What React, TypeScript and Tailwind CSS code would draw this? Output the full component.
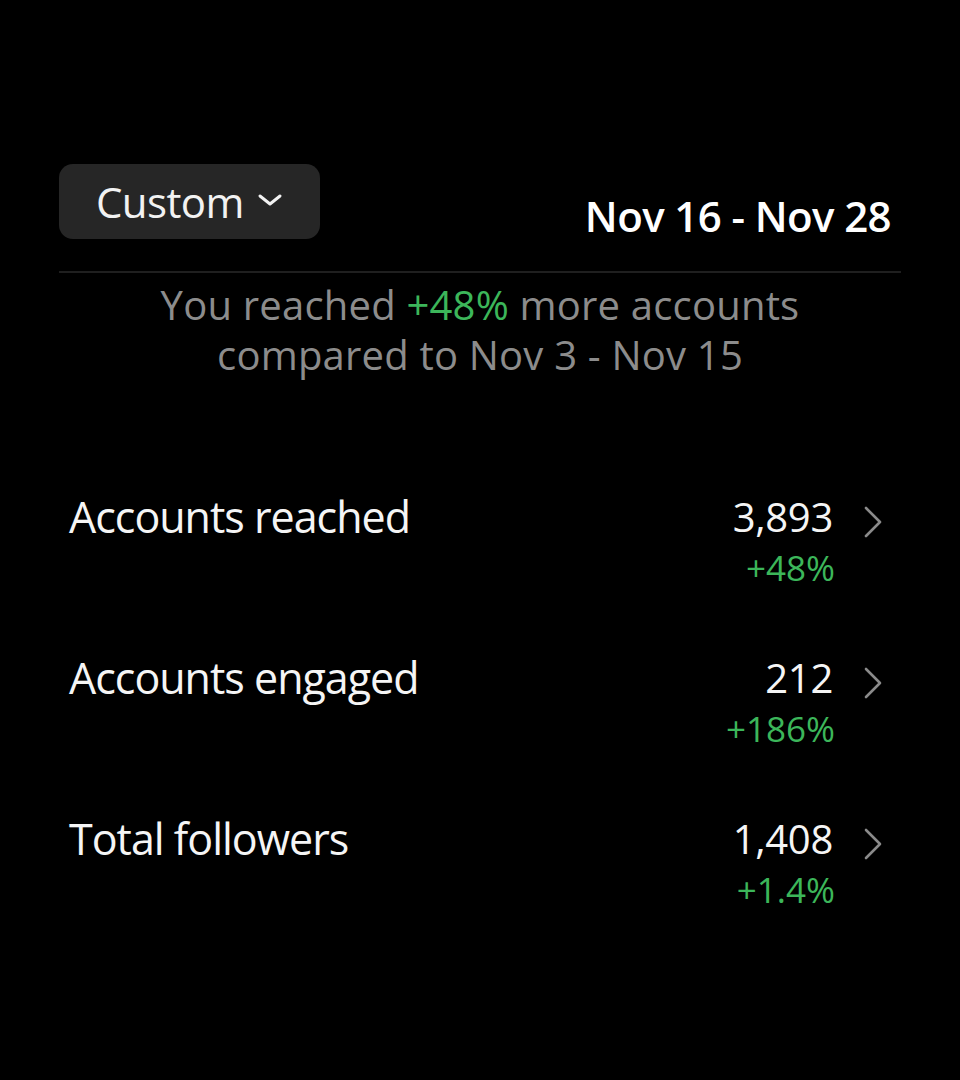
const stats = [
  { label: 'Accounts reached', value: '3,893', change: '+48%' },
  { label: 'Accounts engaged', value: '212', change: '+186%' },
  { label: 'Total followers', value: '1,408', change: '+1.4%' },
];

function Caret() {
  return (
    <svg width="26" height="14" viewBox="0 0 26 14" fill="none" className="mt-[-4px]">
      <polyline points="3,3 13,11 23,3" stroke="#f2f2f2" strokeWidth="3" strokeLinecap="round" strokeLinejoin="round" />
    </svg>
  );
}

function Chevron() {
  return (
    <svg width="20" height="32" viewBox="0 0 20 32" fill="none" className="ml-[30px] mt-[14px] mr-[18px] shrink-0">
      <polyline points="3,2 17,16 3,30" stroke="#8a8a8a" strokeWidth="2.6" strokeLinecap="round" strokeLinejoin="round" />
    </svg>
  );
}

export default function App() {
  return (
    <div
      className="w-[960px] h-[1080px] bg-black text-white pt-[164px] px-[59px]"
      style={{ fontFamily: '"Open Sans", "Noto Sans", sans-serif' }}
    >
      <div className="flex items-end justify-between">
        <button className="h-[75px] w-[261px] rounded-[14px] bg-[#262626] flex items-center pl-[37px] gap-[13px]">
          <span className="text-[42px] leading-[50px] font-medium tracking-[-0.6px] text-[#f2f2f2]">Custom</span>
          <Caret />
        </button>
        <div className="text-[42px] leading-[42px] font-semibold tracking-[-0.6px] mr-[10px] mb-[2px]">
          Nov 16 - Nov 28
        </div>
      </div>

      <div className="mt-[32px] h-[2px] bg-[#1f1f1f]" />

      <div className="mt-[7px] text-center text-[40px] text-[#8c8c8c] tracking-[0.2px]">
        <p className="h-[50px] leading-[50px]">
          You reached <span className="text-[#3cb65a] font-medium">+48%</span> more accounts
        </p>
        <p className="h-[50px] leading-[50px]">compared to Nov 3 - Nov 15</p>
      </div>

      <div className="mt-[112px] flex flex-col gap-[65px] pl-[10px]">
        {stats.map((s) => (
          <div key={s.label} className="flex items-start justify-between">
            <span className="text-[43px] leading-[50px] text-[#f5f5f5] tracking-[-1px]">{s.label}</span>
            <div className="flex items-start">
              <div className="flex flex-col items-end">
                <span className="text-[40px] leading-[50px] text-[#f5f5f5] tracking-[-0.3px]">{s.value}</span>
                <span className="mt-[6px] mr-[-2px] text-[35px] leading-[40px] text-[#3cb65a]">{s.change}</span>
              </div>
              <Chevron />
            </div>
          </div>
        ))}
      </div>
    </div>
  );
}
